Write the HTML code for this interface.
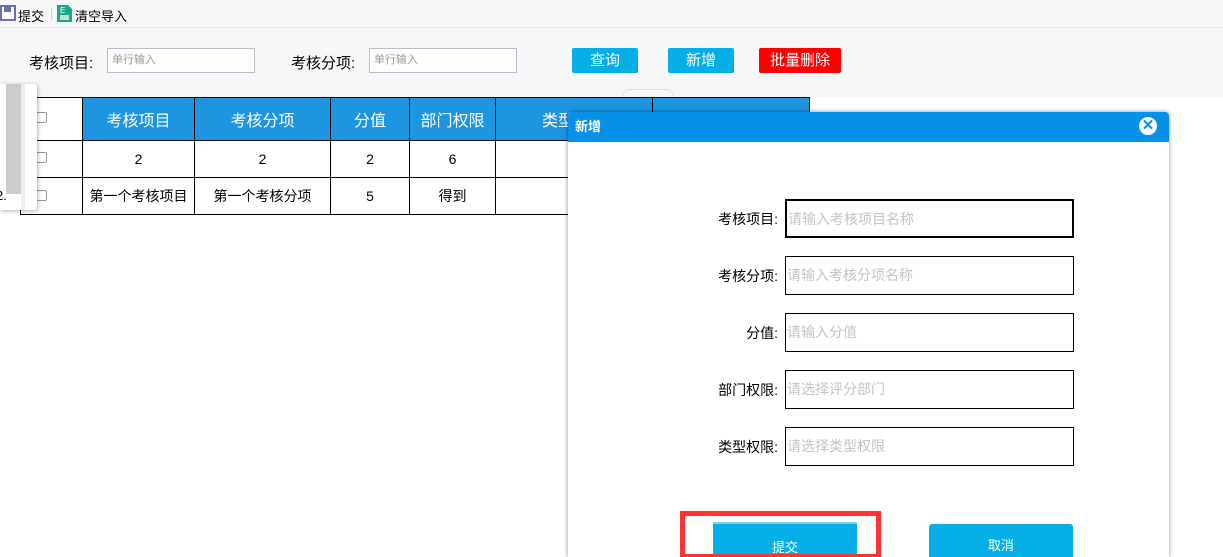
<!DOCTYPE html>
<html style="overflow:hidden;width:1223px;height:557px"><head><meta charset="utf-8"><style>
*{margin:0;padding:0;box-sizing:border-box}
body{width:1223px;height:557px;overflow:hidden;background:#fff;font-family:"Liberation Sans","Noto Sans CJK SC",sans-serif;position:relative;font-size:14px;color:#000}
.abs{position:absolute}
.top{left:0;top:0;width:1223px;height:97px;background:#f6f7f9}
.tb{left:0;top:0;width:1223px;height:28px;border-bottom:1px solid #e3e5e8;font-size:13px}
.btn{color:#fff;font-size:15px;text-align:center;line-height:25px;height:25px;border-radius:2px}
.inp{background:#fff;border:1px solid #b8bccb;height:25px;font-size:11px;color:#999;padding-left:4px;line-height:23px}
table{border-collapse:collapse;position:absolute;left:20px;top:97px}
td{border:1px solid #000;text-align:center;font-size:14px}
th{border:1px solid #000;background:#1e95e0;color:#fff;font-weight:normal;font-size:16px;height:43px}
.lbl{font-size:14px;text-align:right;width:122px}
.fi{left:785px;width:289px;height:39px;border:1px solid #000;color:#c4c4c4;font-size:14px;line-height:37px;padding-left:1px}
</style></head><body>
<div class="abs top"></div>
<div class="abs tb">
<svg class="abs" style="left:0;top:5px" width="16" height="16"><rect x="1" y="1" width="14" height="14" fill="#fff" stroke="#6a6fa8" stroke-width="2"/><rect x="4" y="2" width="7" height="5" fill="#6a6fa8"/></svg>
<span class="abs" style="left:18px;top:6px">提交</span>
<span class="abs" style="left:50px;top:6px;color:#ccc">|</span>
<svg class="abs" style="left:57px;top:5px" width="15" height="17"><path d="M0 0h11l4 4v13H0z" fill="#19a98a"/><text x="3" y="8" font-size="8" fill="#fff" font-family="Liberation Sans">E</text><rect x="3" y="10" width="9" height="5" fill="#fff" opacity=".7"/></svg>
<span class="abs" style="left:75px;top:6px">清空导入</span>
</div>
<span class="abs" style="left:29px;top:52px;font-size:15px">考核项目:</span>
<div class="abs inp" style="left:107px;top:48px;width:148px">单行输入</div>
<span class="abs" style="left:291px;top:52px;font-size:15px">考核分项:</span>
<div class="abs inp" style="left:369px;top:48px;width:148px">单行输入</div>
<div class="abs btn" style="left:572px;top:48px;width:66px;background:#06aee8">查询</div>
<div class="abs btn" style="left:668px;top:48px;width:66px;background:#06aee8">新增</div>
<div class="abs btn" style="left:759px;top:48px;width:82px;background:#fe0000">批量删除</div>
<div class="abs" style="left:622px;top:89px;width:52px;height:8px;border:1px solid #ddd;border-bottom:none;border-radius:8px 8px 0 0;background:#f6f7f9"></div>
<table>
<tr><th style="width:62px;background:#fff"></th><th style="width:112px">考核项目</th><th style="width:136px">考核分项</th><th style="width:79px">分值</th><th style="width:86px">部门权限</th><th style="width:157px">类型权限</th><th style="width:157px">操作</th></tr>
<tr style="height:37px"><td></td><td>2</td><td>2</td><td>2</td><td>6</td><td></td><td></td></tr>
<tr style="height:37px"><td></td><td>第一个考核项目</td><td>第一个考核分项</td><td>5</td><td>得到</td><td></td><td></td></tr>
</table>
<div class="abs" style="left:36px;top:112px;width:11px;height:11px;border:1px solid #999;border-radius:2px"></div>
<div class="abs" style="left:36px;top:152px;width:11px;height:11px;border:1px solid #999;border-radius:2px"></div>
<div class="abs" style="left:36px;top:190px;width:11px;height:11px;border:1px solid #999;border-radius:2px"></div>
<div class="abs" style="left:0;top:84px;width:37px;height:126px;background:#fff;box-shadow:1px 1px 4px rgba(0,0,0,.3);border-radius:0 3px 3px 0"><div class="abs" style="left:6px;top:0;width:15px;height:110px;background:#ccc"></div><div class="abs" style="left:21px;top:0;width:4px;height:126px;background:#eee"></div><span class="abs" style="left:-4px;top:104px;font-size:13px">2.</span></div>
<div class="abs" style="left:568px;top:112px;width:601px;height:445px;background:#fff;box-shadow:0 0 5px rgba(0,0,0,.45);border-radius:4px 4px 0 0">
<div class="abs" style="left:0;top:0;width:601px;height:30px;background:#0790e8;border-radius:4px 4px 0 0;color:#fff;font-weight:bold;font-size:13px;line-height:30px;padding-left:7px">新增</div>
<div class="abs" style="left:571px;top:5px;width:18px;height:18px;border-radius:50%;background:#fff;color:#0790e8;font-weight:bold;font-size:15px;line-height:18px;text-align:center">✕</div>
</div>
<div class="abs lbl" style="left:656px;top:209px">考核项目:</div>
<div class="abs fi" style="top:199px;border-width:2px">请输入考核项目名称</div>
<div class="abs lbl" style="left:656px;top:266px">考核分项:</div>
<div class="abs fi" style="top:256px">请输入考核分项名称</div>
<div class="abs lbl" style="left:656px;top:323px">分值:</div>
<div class="abs fi" style="top:313px">请输入分值</div>
<div class="abs lbl" style="left:656px;top:380px">部门权限:</div>
<div class="abs fi" style="top:370px">请选择评分部门</div>
<div class="abs lbl" style="left:656px;top:437px">类型权限:</div>
<div class="abs fi" style="top:427px">请选择类型权限</div>
<div class="abs" style="left:713px;top:522px;width:144px;height:35px;background:#06aee8;border-top:2px solid #7dd0f3;color:#fff;font-size:13px;text-align:center;padding-top:13px">提交</div>
<div class="abs" style="left:929px;top:524px;width:144px;height:33px;background:#06aee8;border-radius:3px 3px 0 0;color:#fff;font-size:13px;text-align:center;padding-top:11px">取消</div>
<div class="abs" style="left:680px;top:511px;width:201px;height:46px;border:5px solid #f33;border-bottom-width:3px"></div>
</body></html>
